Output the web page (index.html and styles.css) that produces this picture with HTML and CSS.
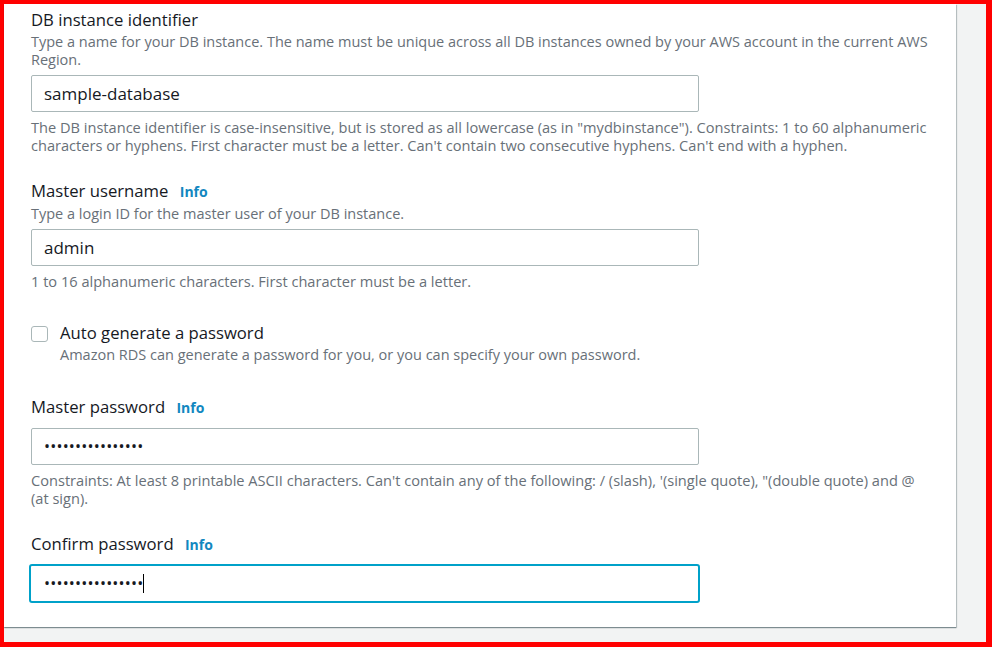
FILE: index.html
```html
<!DOCTYPE html>
<html lang="en">
<head>
<meta charset="utf-8">
<title>Settings</title>
<link rel="stylesheet" href="styles.css">
</head>
<body>
<div class="frame">
  <div class="page">
    <div class="card">
      <div class="field">
        <div class="label">DB instance identifier</div>
        <div class="desc">Type a name for your DB instance. The name must be unique across all DB instances owned by your AWS account in the current AWS Region.</div>
        <div class="input">sample-database</div>
        <div class="hint">The DB instance identifier is case-insensitive, but is stored as all lowercase (as in "mydbinstance"). Constraints: 1 to 60 alphanumeric characters or hyphens. First character must be a letter. Can't contain two consecutive hyphens. Can't end with a hyphen.</div>
      </div>

      <div class="field">
        <div class="label">Master username <a class="info" href="#">Info</a></div>
        <div class="desc">Type a login ID for the master user of your DB instance.</div>
        <div class="input">admin</div>
        <div class="hint">1 to 16 alphanumeric characters. First character must be a letter.</div>
      </div>

      <div class="field check-field">
        <div class="check-row">
          <span class="checkbox"></span>
          <div>
            <div class="label">Auto generate a password</div>
            <div class="desc">Amazon RDS can generate a password for you, or you can specify your own password.</div>
          </div>
        </div>
      </div>

      <div class="field">
        <div class="label label-solo">Master password <a class="info" href="#">Info</a></div>
        <div class="input"><span class="dots">••••••••••••••••</span></div>
        <div class="hint">Constraints: At least 8 printable ASCII characters. Can't contain any of the following: / (slash), '(single quote), "(double quote) and @ (at sign).</div>
      </div>

      <div class="field">
        <div class="label label-solo">Confirm password <a class="info" href="#">Info</a></div>
        <div class="input focused"><span class="dots">••••••••••••••••</span><span class="caret"></span></div>
      </div>
    </div>
  </div>
</div>
</body>
</html>
```

FILE: styles.css
```css
* { box-sizing: border-box; }

html, body {
  margin: 0;
  padding: 0;
}

body {
  width: 992px;
  height: 647px;
  overflow: hidden;
  font-family: "Open Sans", "Noto Sans", Arial, sans-serif;
  color: #16191f;
}

.frame {
  width: 992px;
  height: 647px;
  border-style: solid;
  border-color: #ff0000;
  border-width: 4px 6px 5px 4px;
  background: #f2f3f3;
  padding: 0 30px 15px 0;
}

.page {
  height: 100%;
}

.card {
  height: 100%;
  background: #ffffff;
  box-shadow: 0 1px 1px 0 rgba(0, 28, 36, 0.35), 1px 1px 1px 0 rgba(0, 28, 36, 0.2);
  padding: 5px 22px 0 27px;
}

.field {
  margin-bottom: 26px;
}

.label {
  font-size: 16.7px;
  line-height: 22px;
  color: #16191f;
}

.label-solo {
  margin-bottom: 9px;
}

.info {
  font-size: 14px;
  font-weight: 700;
  color: #1287c0;
  text-decoration: none;
  margin-left: 7px;
}

.desc {
  font-size: 14.5px;
  line-height: 18px;
  color: #687078;
  margin-top: 2px;
}

.input {
  width: 668px;
  height: 37px;
  border: 1px solid #aab7b8;
  border-radius: 2px;
  margin-top: 6px;
  padding: 0 12px;
  font-size: 17px;
  line-height: 35px;
  color: #16191f;
  display: flex;
  align-items: center;
}

.label-solo + .input {
  margin-top: 0;
}

.input.focused {
  border: 2px solid #00a1c9;
  border-radius: 3px;
  margin-left: -2px;
  margin-top: -1px;
  width: 671px;
  height: 39px;
  padding-left: 13px;
}

.dots {
  font-size: 16px;
  letter-spacing: 0.2px;
  color: #16191f;
}

.caret {
  width: 1px;
  height: 19px;
  background: #000;
  margin-left: 0;
}

.hint {
  font-size: 14.6px;
  line-height: 18px;
  color: #687078;
  margin-top: 6px;
}

.check-field {
  margin-top: 32px;
  margin-bottom: 32px;
}

.check-row {
  display: flex;
  align-items: flex-start;
}

.checkbox {
  flex: none;
  width: 17px;
  height: 16px;
  border: 1px solid #aab7b8;
  border-radius: 3px;
  margin-top: 4px;
  margin-right: 12px;
  background: #fff;
}
```
